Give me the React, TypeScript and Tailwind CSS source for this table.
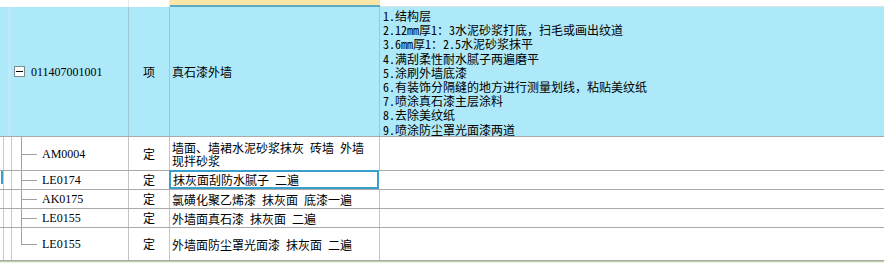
import React from "react";

const FONT = { fontFamily: '"Liberation Serif", "Noto Sans CJK SC", serif' };
const CJK = {
  fontFamily: '"Noto Sans Mono CJK SC", "Noto Sans CJK SC", "Liberation Sans", sans-serif',
};

type Sub = {
  code: string;
  unit: string;
  name: string;
  h: string;
  last?: boolean;
  selected?: boolean;
};

const subs: Sub[] = [
  { code: "AM0004", unit: "定", name: "墙面、墙裙水泥砂浆抹灰 砖墙 外墙 现拌砂浆", h: "h-[34px]" },
  { code: "LE0174", unit: "定", name: "抹灰面刮防水腻子 二遍", h: "h-[19px]", selected: true },
  { code: "AK0175", unit: "定", name: "氯磺化聚乙烯漆 抹灰面 底漆一遍", h: "h-[19px]" },
  { code: "LE0155", unit: "定", name: "外墙面真石漆 抹灰面 二遍", h: "h-[19px]" },
  { code: "LE0155", unit: "定", name: "外墙面防尘罩光面漆 抹灰面 二遍", h: "h-[33px]", last: true },
];

const steps = [
  "1.结构层",
  "2.12mm厚1：3水泥砂浆打底，扫毛或画出纹道",
  "3.6mm厚1：2.5水泥砂浆抹平",
  "4.满刮柔性耐水腻子两遍磨平",
  "5.涂刷外墙底漆",
  "6.有装饰分隔缝的地方进行测量划线，粘贴美纹纸",
  "7.喷涂真石漆主层涂料",
  "8.去除美纹纸",
  "9.喷涂防尘罩光面漆两道",
];

function SubRow({ row }: { row: Sub }) {
  const nameCell = row.selected
    ? "border-2 border-[#3a9fca] -mt-px -ml-px pl-[2px]"
    : "border-r border-[#c4c4c4] pl-[2px]";
  return (
    <div className={`flex ${row.h} border-b border-[#a9a9a9] bg-white text-[12px] text-black`}>
      <div className="relative flex w-[129px] shrink-0 border-r border-[#c4c4c4]">
        {row.selected && <div className="absolute left-[1px] top-0 h-[13px] w-[2px] bg-[#3a9fca]" />}
        <div className="w-[3px]" />
        <div className="w-[8px] border-l border-[#c8c8c8]" />
        <div className="relative flex flex-1 items-center border-l border-[#c8c8c8] pl-[30px]">
          <div
            className={`absolute left-[9px] top-0 w-px bg-[#a0a0a0] ${row.last ? "h-1/2" : "h-full"}`}
          />
          <div className="absolute left-[9px] top-1/2 h-px w-[16px] bg-[#a0a0a0]" />
          <span style={FONT}>{row.code}</span>
        </div>
      </div>
      <div className="flex w-[41px] shrink-0 items-center justify-center border-r border-[#c4c4c4]" style={CJK}>
        {row.unit}
      </div>
      <div
        className={`flex w-[210px] shrink-0 items-center pr-[8px] leading-[13px] ${nameCell}`}
        style={CJK}
      >
        {row.name}
      </div>
      <div className="flex-1" />
    </div>
  );
}

export default function App() {
  return (
    <div className="h-[263px] w-[884px] overflow-hidden bg-white">
      <div className="flex h-[7px]">
        <div className="w-[129px] border-r border-[#e8e8e8]" />
        <div className="w-[41px] border-r border-[#e8e8e8]" />
        <div className="w-[210px] border-b-2 border-[#5aaac4] bg-[#fde7a6]" />
        <div className="flex-1 border-b border-[#e0e0e0]" />
      </div>
      <div className="flex h-[130px] border-b border-[#a9a9a9] bg-[#aee9fa] text-[12px] text-black">
        <div className="flex w-[129px] shrink-0 border-r border-[#9fc6d2]">
          <div className="w-[3px]" />
          <div className="w-[5px] border-l border-[#c3e3ec]" />
          <div className="w-[3px] bg-[#bdeafa]" />
          <div className="flex flex-1 items-center gap-[6px] pl-[3px]">
            <div className="flex h-[11px] w-[11px] items-center justify-center border border-[#7c8a90] bg-white">
              <div className="h-px w-[7px] bg-black" />
            </div>
            <span style={FONT}>011407001001</span>
          </div>
        </div>
        <div className="flex w-[41px] shrink-0 items-center justify-center border-r border-[#9fc6d2]" style={CJK}>
          项
        </div>
        <div className="flex w-[210px] shrink-0 items-center border-r border-[#9fc6d2] pl-[2px]" style={CJK}>
          真石漆外墙
        </div>
        <div className="flex-1 pl-[3px] pt-[2px] leading-[14.2px]" style={CJK}>
          {steps.map((s) => (
            <div key={s}>{s}</div>
          ))}
        </div>
      </div>
      {subs.map((r, i) => (
        <SubRow key={i} row={r} />
      ))}
      <div className="h-[3px] border-t border-[#b6d0a8] bg-[#eaf8e4]" />
    </div>
  );
}
